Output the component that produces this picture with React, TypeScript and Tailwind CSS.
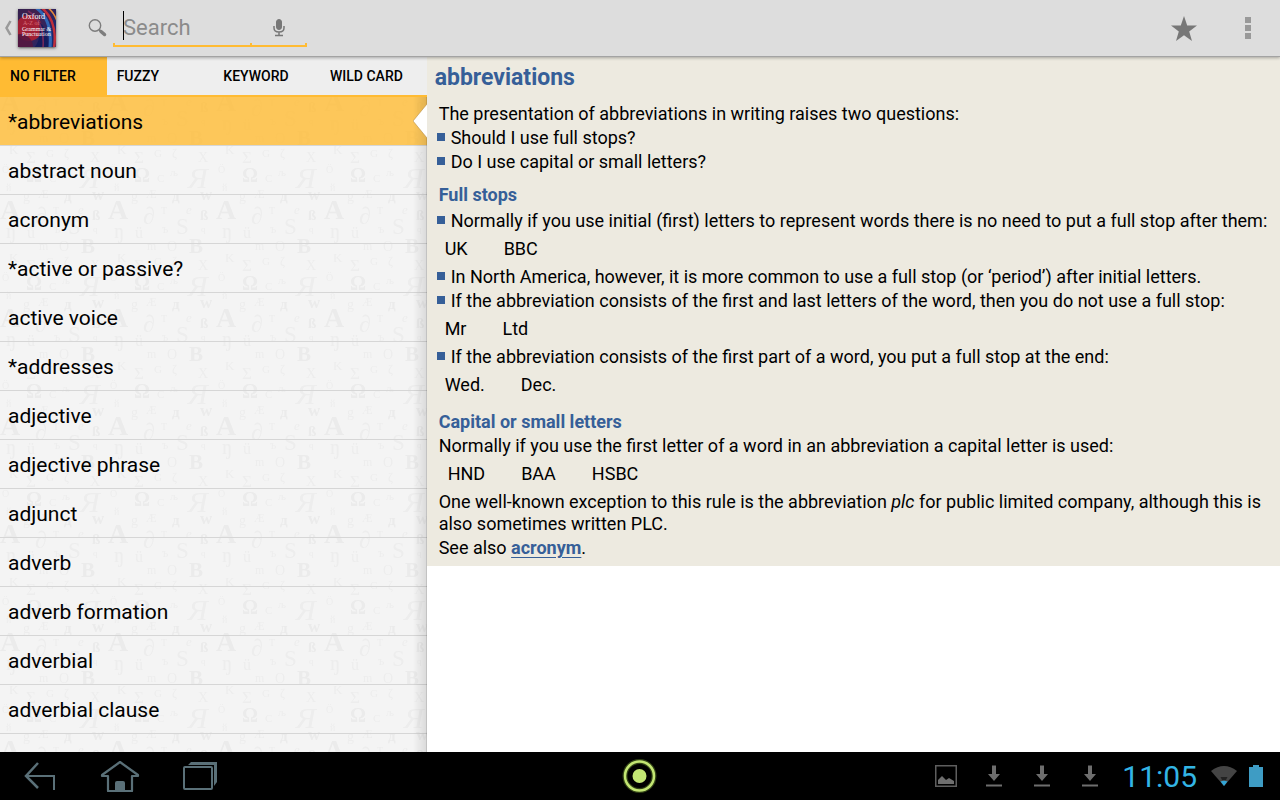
import type { ReactNode } from "react";

const glyphs: [string, number, number, number, string?][] = [
  ["K", 9, 8, 13],
  ["Σ", 26, 17, 17],
  ["G", 46, 11, 11],
  ["ζ", 64, 11, 12],
  ["X", 90, 16, 14],
  ["Ö", 2, 27, 10],
  ["Ω", 26, 36, 20, "b"],
  ["Я", 80, 42, 30, "i"],
  ["љ", 62, 30, 11],
  ["C", 49, 36, 11],
  ["й", 6, 45, 10],
  ["g", 23, 55, 14],
  ["Æ", 38, 52, 12],
  ["д", 64, 55, 15, "b"],
  ["w", 92, 54, 17, "b"],
  ["A", 0, 73, 28, "b"],
  ["∂", 35, 78, 24],
  ["T", 53, 68, 10],
  ["e", 78, 68, 13, "i"],
  ["ß", 92, 74, 15, "b"],
  ["ŋ", 6, 92, 21],
  ["ü", 27, 92, 16],
  ["ъ", 54, 87, 12],
  ["S", 68, 88, 23],
  ["q", 93, 86, 9],
  ["m", 39, 104, 12],
  ["O", 59, 105, 14],
  ["B", 81, 107, 21, "b"],
];

function LetterPattern() {
  return (
    <svg className="absolute inset-0 h-full w-full" aria-hidden="true">
      <defs>
        <pattern id="letters" width="108" height="108" y="49" patternUnits="userSpaceOnUse">
          {glyphs.map(([ch, x, y, size, style]) => (
            <text
              key={ch}
              x={x}
              y={y}
              fontSize={size}
              fontFamily="Liberation Serif, serif"
              fontWeight={style === "b" ? 700 : 400}
              fontStyle={style === "i" ? "italic" : "normal"}
              fill={style === "b" ? "#ebebeb" : "#ededed"}
            >
              {ch}
            </text>
          ))}
        </pattern>
      </defs>
      <rect width="100%" height="100%" fill="url(#letters)" />
    </svg>
  );
}

function AppIcon() {
  return (
    <svg
      viewBox="0 0 38 38"
      className="h-[38px] w-[38px] shadow-sm shadow-black/50"
      role="img"
      aria-label="Oxford A-Z of Grammar & Punctuation"
    >
      <defs>
        <linearGradient id="cover" x1="0" y1="0" x2="1" y2="0.6">
          <stop offset="0" stopColor="#33204f" />
          <stop offset="0.5" stopColor="#43204f" />
          <stop offset="1" stopColor="#172a72" />
        </linearGradient>
        <clipPath id="coverClip">
          <rect width="38" height="38" />
        </clipPath>
      </defs>
      <g clipPath="url(#coverClip)">
        <rect width="38" height="38" fill="url(#cover)" />
        <circle cx="11" cy="19" r="13" fill="#b3202f" opacity="0.85" />
        <circle cx="2" cy="38" r="13" fill="#55163f" opacity="0.85" />
        <path d="M16 39Q24 30 21 12Q31 22 30 39Z" fill="#141c5c" />
        <g fill="none">
          <path d="M17 -2Q35 10 32 39" stroke="#2f66b5" strokeWidth="3" />
          <path d="M23 -2Q40 12 36 39" stroke="#c02f3a" strokeWidth="2.500" />
          <path d="M29 -2Q36 3 39 12" stroke="#e58a3c" strokeWidth="1.600" />
          <path d="M10 2Q27 12 25 39" stroke="#7b2a5a" strokeWidth="1.500" />
        </g>
        <g fill="#fff" fontFamily="Liberation Serif, serif">
          <text x="4" y="10" fontSize="8">Oxford</text>
          <text x="5" y="16" fontSize="6" fill="#d9707a">A-Z of</text>
          <text x="4" y="21.500" fontSize="6">Grammar &amp;</text>
          <text x="4" y="27" fontSize="6">Punctuation</text>
        </g>
      </g>
    </svg>
  );
}

function Header() {
  return (
    <header className="relative flex h-[57px] shrink-0 items-center border-b border-[#a3a3a3] bg-[#dddddd] shadow-[0_1px_3px_rgba(0,0,0,0.3)]">
      <button aria-label="Back" className="flex items-center gap-1.5 pl-1">
        <svg viewBox="0 0 8 16" className="h-4 w-2" fill="none" stroke="#9a9a9a" strokeWidth="2.500">
          <path d="M6.500 1L2.500 8L6.500 15" />
        </svg>
        <AppIcon />
      </button>
      <label htmlFor="search" className="ml-8 mr-1.5" aria-label="Search">
        <svg viewBox="0 0 19 19" className="h-[19px] w-[19px]" fill="none" stroke="#7d7d7d">
          <circle cx="7" cy="6.500" r="5.700" strokeWidth="1.400" />
          <path d="M11 10.500L13 12.500" strokeWidth="1.800" />
          <path d="M13 12.500L16.500 15.500" strokeWidth="3.500" strokeLinecap="round" />
        </svg>
      </label>
      <div className="relative mb-[9px] flex h-9 items-center self-end">
        <input
          id="search"
          autoFocus
          placeholder="Search"
          className="h-full w-[138px] border-b-2 border-[#ffbb33] bg-transparent pb-0.5 pl-2.5 text-[22px] text-black caret-transparent outline-none placeholder:text-[#8b8b8b]"
        />
        <button
          aria-label="Voice search"
          className="flex h-full w-14 items-center justify-center border-b-2 border-[#ffbb33]"
        >
          <svg viewBox="0 0 12 18" className="h-[18px] w-3" fill="none" stroke="#777">
            <rect x="3.500" y="0.500" width="5" height="10" rx="2.500" fill="#777" />
            <path d="M1 7V9Q1 13 6 13Q11 13 11 9V7M6 13V16M2 16.500H10" strokeWidth="1.500" />
          </svg>
        </button>
        <span className="absolute left-2.5 top-0 h-[29px] w-px bg-black" />
        <span className="absolute bottom-0 left-0 h-1 w-0.5 bg-[#ffbb33]" />
        <span className="absolute bottom-0 left-[137px] h-1 w-0.5 bg-[#ffbb33]" />
        <span className="absolute bottom-0 right-0 h-1 w-0.5 bg-[#ffbb33]" />
      </div>
      <div className="ml-auto flex items-center gap-8 pr-4">
        <button aria-label="Favourite" className="flex h-8 w-8 items-center justify-center">
          <svg viewBox="0 0 26 25" className="h-[25px] w-[26px]" fill="#777777">
            <path d="M13 0L16.200 9.400L26 9.500L18.200 15.400L21 25L13 19.300L5 25L7.800 15.400L0 9.500L9.800 9.400Z" />
          </svg>
        </button>
        <button aria-label="More options" className="flex h-8 w-8 flex-col items-center justify-center gap-0.5">
          <span className="h-1.5 w-1.5 bg-[#999]" />
          <span className="h-1.5 w-1.5 bg-[#999]" />
          <span className="h-1.5 w-1.5 bg-[#999]" />
        </button>
      </div>
    </header>
  );
}

const filters = ["NO FILTER", "FUZZY", "KEYWORD", "WILD CARD"];
const entries = [
  "*abbreviations",
  "abstract noun",
  "acronym",
  "*active or passive?",
  "active voice",
  "*addresses",
  "adjective",
  "adjective phrase",
  "adjunct",
  "adverb",
  "adverb formation",
  "adverbial",
  "adverbial clause",
];

function Sidebar() {
  return (
    <aside className="flex w-1/3 shrink-0 flex-col">
      <div role="tablist" className="grid shrink-0 grid-cols-4 border-b-2 border-[#ffbb33] bg-[#eeeeee]">
        {filters.map((f, i) => (
          <button
            key={f}
            role="tab"
            aria-selected={i === 0}
            className={`h-[38px] pl-2.5 text-left text-sm font-medium text-black ${i === 0 ? "bg-[#ffbb33]" : ""}`}
          >
            {f}
          </button>
        ))}
      </div>
      <div className="relative min-h-0 flex-1 overflow-hidden bg-[#f4f4f4]">
        <LetterPattern />
        <ul className="relative">
          {entries.map((e, i) => (
            <li key={e} className={`border-b border-[#d6d6d6] ${i === 0 ? "bg-[#ffbb33]/80" : ""}`}>
              <button className="h-12 w-full pl-2 pt-1 text-left text-[21px] text-black">{e}</button>
            </li>
          ))}
        </ul>
        <div className="absolute inset-y-0 right-0 w-3.5 border-r border-black/20 bg-linear-to-l from-black/10 to-transparent" />
        <svg viewBox="0 0 14 34" className="absolute right-0 top-[7px] h-[34px] w-3.5" aria-hidden="true">
          <path d="M14 0L0 17L14 34Z" fill="#fff" />
          <path d="M14 0L0 17L14 34" fill="none" stroke="#b98f45" strokeOpacity="0.6" />
        </svg>
      </div>
    </aside>
  );
}

function Bullet({ children }: { children: ReactNode }) {
  return (
    <li className="-ml-0.5 flex gap-1.5">
      <span className="mt-1.5 h-2 w-2 shrink-0 bg-[#365f98]" />
      <span>{children}</span>
    </li>
  );
}

function Examples({ items, wide }: { items: string[]; wide?: boolean }) {
  return (
    <p className={`my-1.5 flex gap-9 ${wide ? "pl-[9px]" : "pl-1.5"}`}>
      {items.map((t) => (
        <span key={t}>{t}</span>
      ))}
    </p>
  );
}

function Article() {
  return (
    <main className="min-w-0 flex-1 bg-white">
      <article className="bg-[#edeae0] px-3 pb-[7px] pt-[5px] text-[18px] leading-[22px] text-black">
        <h1 className="-ml-1 mb-[9px] text-[23px] font-bold leading-8 text-[#365f98]">abbreviations</h1>
        <p className="mb-0.5">The presentation of abbreviations in writing raises two questions:</p>
        <ul className="space-y-0.5">
          <Bullet>Should I use full stops?</Bullet>
          <Bullet>Do I use capital or small letters?</Bullet>
        </ul>
        <h2 className="mb-1 mt-[11px] font-bold text-[#365f98]">Full stops</h2>
        <ul>
          <Bullet>
            Normally if you use initial (first) letters to represent words there is no need to put a full stop after them:
          </Bullet>
        </ul>
        <Examples items={["UK", "BBC"]} />
        <ul className="space-y-0.5">
          <Bullet>
            In North America, however, it is more common to use a full stop (or ‘period’) after initial letters.
          </Bullet>
          <Bullet>
            If the abbreviation consists of the first and last letters of the word, then you do not use a full stop:
          </Bullet>
        </ul>
        <Examples items={["Mr", "Ltd"]} />
        <ul>
          <Bullet>If the abbreviation consists of the first part of a word, you put a full stop at the end:</Bullet>
        </ul>
        <Examples items={["Wed.", "Dec."]} />
        <h2 className="mb-0.5 mt-[15px] font-bold text-[#365f98]">Capital or small letters</h2>
        <p>Normally if you use the first letter of a word in an abbreviation a capital letter is used:</p>
        <Examples items={["HND", "BAA", "HSBC"]} wide />
        <p className="mb-0.5">
          One well-known exception to this rule is the abbreviation <em>plc</em> for public limited company, although
          this is also sometimes written PLC.
        </p>
        <p>
          See also{" "}
          <a href="#acronym" className="font-bold text-[#365f98] underline underline-offset-3">
            acronym
          </a>
          .
        </p>
      </article>
    </main>
  );
}

function Download() {
  return (
    <svg viewBox="0 0 16 22" className="h-[22px] w-4" fill="#6e6e6e" aria-hidden="true">
      <path d="M6 0.500H10V9H14L8 16L2 9H6ZM0 19.500H16V21.500H0Z" />
    </svg>
  );
}

function SystemBar() {
  return (
    <footer className="grid h-12 shrink-0 grid-cols-[1fr_auto_1fr] items-center bg-black">
      <nav className="flex items-center" aria-label="System">
        <button aria-label="Back" className="flex w-20 justify-center">
          <svg viewBox="0 0 32 28" className="h-7 w-8" fill="none" stroke="#5a7078" strokeWidth="2">
            <path d="M14 1L2 14L14 26" strokeWidth="2.500" />
            <path d="M2 14H30V28" />
          </svg>
        </button>
        <button aria-label="Home" className="flex w-20 justify-center">
          <svg viewBox="0 0 40 32" className="h-8 w-10" fill="none" stroke="#5a7078" strokeWidth="2.200" strokeLinejoin="round">
            <path d="M20 2L2 15V16H8V31H32V16H38V15Z" />
            <path d="M15 31V23Q15 21 17 21H23Q25 21 25 23V31Z" fill="#5a7078" stroke="none" />
          </svg>
        </button>
        <button aria-label="Recent apps" className="flex w-20 justify-center">
          <svg viewBox="0 0 36 28" className="h-7 w-9" fill="none" stroke="#5a7078" strokeWidth="2">
            <rect x="2" y="5" width="28" height="22" rx="1" />
            <path d="M6 3L9 0H35V20L32 24V3Z" fill="#5a7078" stroke="none" />
          </svg>
        </button>
      </nav>
      <button aria-label="Screenshot" className="flex items-center justify-center">
        <svg viewBox="0 0 36 36" className="h-9 w-9">
          <circle cx="17.500" cy="18" r="14.500" fill="none" stroke="#7ea838" strokeOpacity="0.4" strokeWidth="5" />
          <circle cx="17.500" cy="18" r="14.500" fill="none" stroke="#c3e673" strokeWidth="2.500" />
          <circle cx="17.500" cy="18" r="7" fill="#c3e673" />
        </svg>
      </button>
      <div className="flex items-center justify-end pr-[17px]">
        <svg viewBox="0 0 22 22" className="mr-[29px] h-[22px] w-[22px]" aria-hidden="true">
          <rect x="0.750" y="0.750" width="20.500" height="20.500" fill="none" stroke="#5e5e5e" strokeWidth="1.500" />
          <path d="M3 19V15L7 11L11 15L14 13L19 16V19Z" fill="#6e6e6e" />
        </svg>
        <div className="mr-6 flex gap-8">
          <Download />
          <Download />
          <Download />
        </div>
        <time className="mr-3.5 pt-0.5 text-[30px] leading-10 text-[#33b5e5]">11:05</time>
        <svg viewBox="0 0 26 20" className="mr-3 h-5 w-[26px]" aria-hidden="true">
          <path d="M0 5Q13 -5 26 5L13 20Z" fill="#444" />
          <path d="M9.500 11H16.500L15 14H11Z" fill="#222" />
          <path d="M9.500 15.500Q13 14 16.500 15.500L13 20Z" fill="#33a5d5" />
        </svg>
        <svg viewBox="0 0 14 22" className="h-[22px] w-3.5" aria-hidden="true">
          <path d="M4 0H10V2H14V22H0V2H4Z" fill="#3e9cc4" />
        </svg>
      </div>
    </footer>
  );
}

export default function App() {
  return (
    <div className="flex h-screen flex-col overflow-hidden bg-white font-[Roboto,sans-serif]">
      <Header />
      <div className="flex min-h-0 flex-1">
        <Sidebar />
        <Article />
      </div>
      <SystemBar />
    </div>
  );
}
